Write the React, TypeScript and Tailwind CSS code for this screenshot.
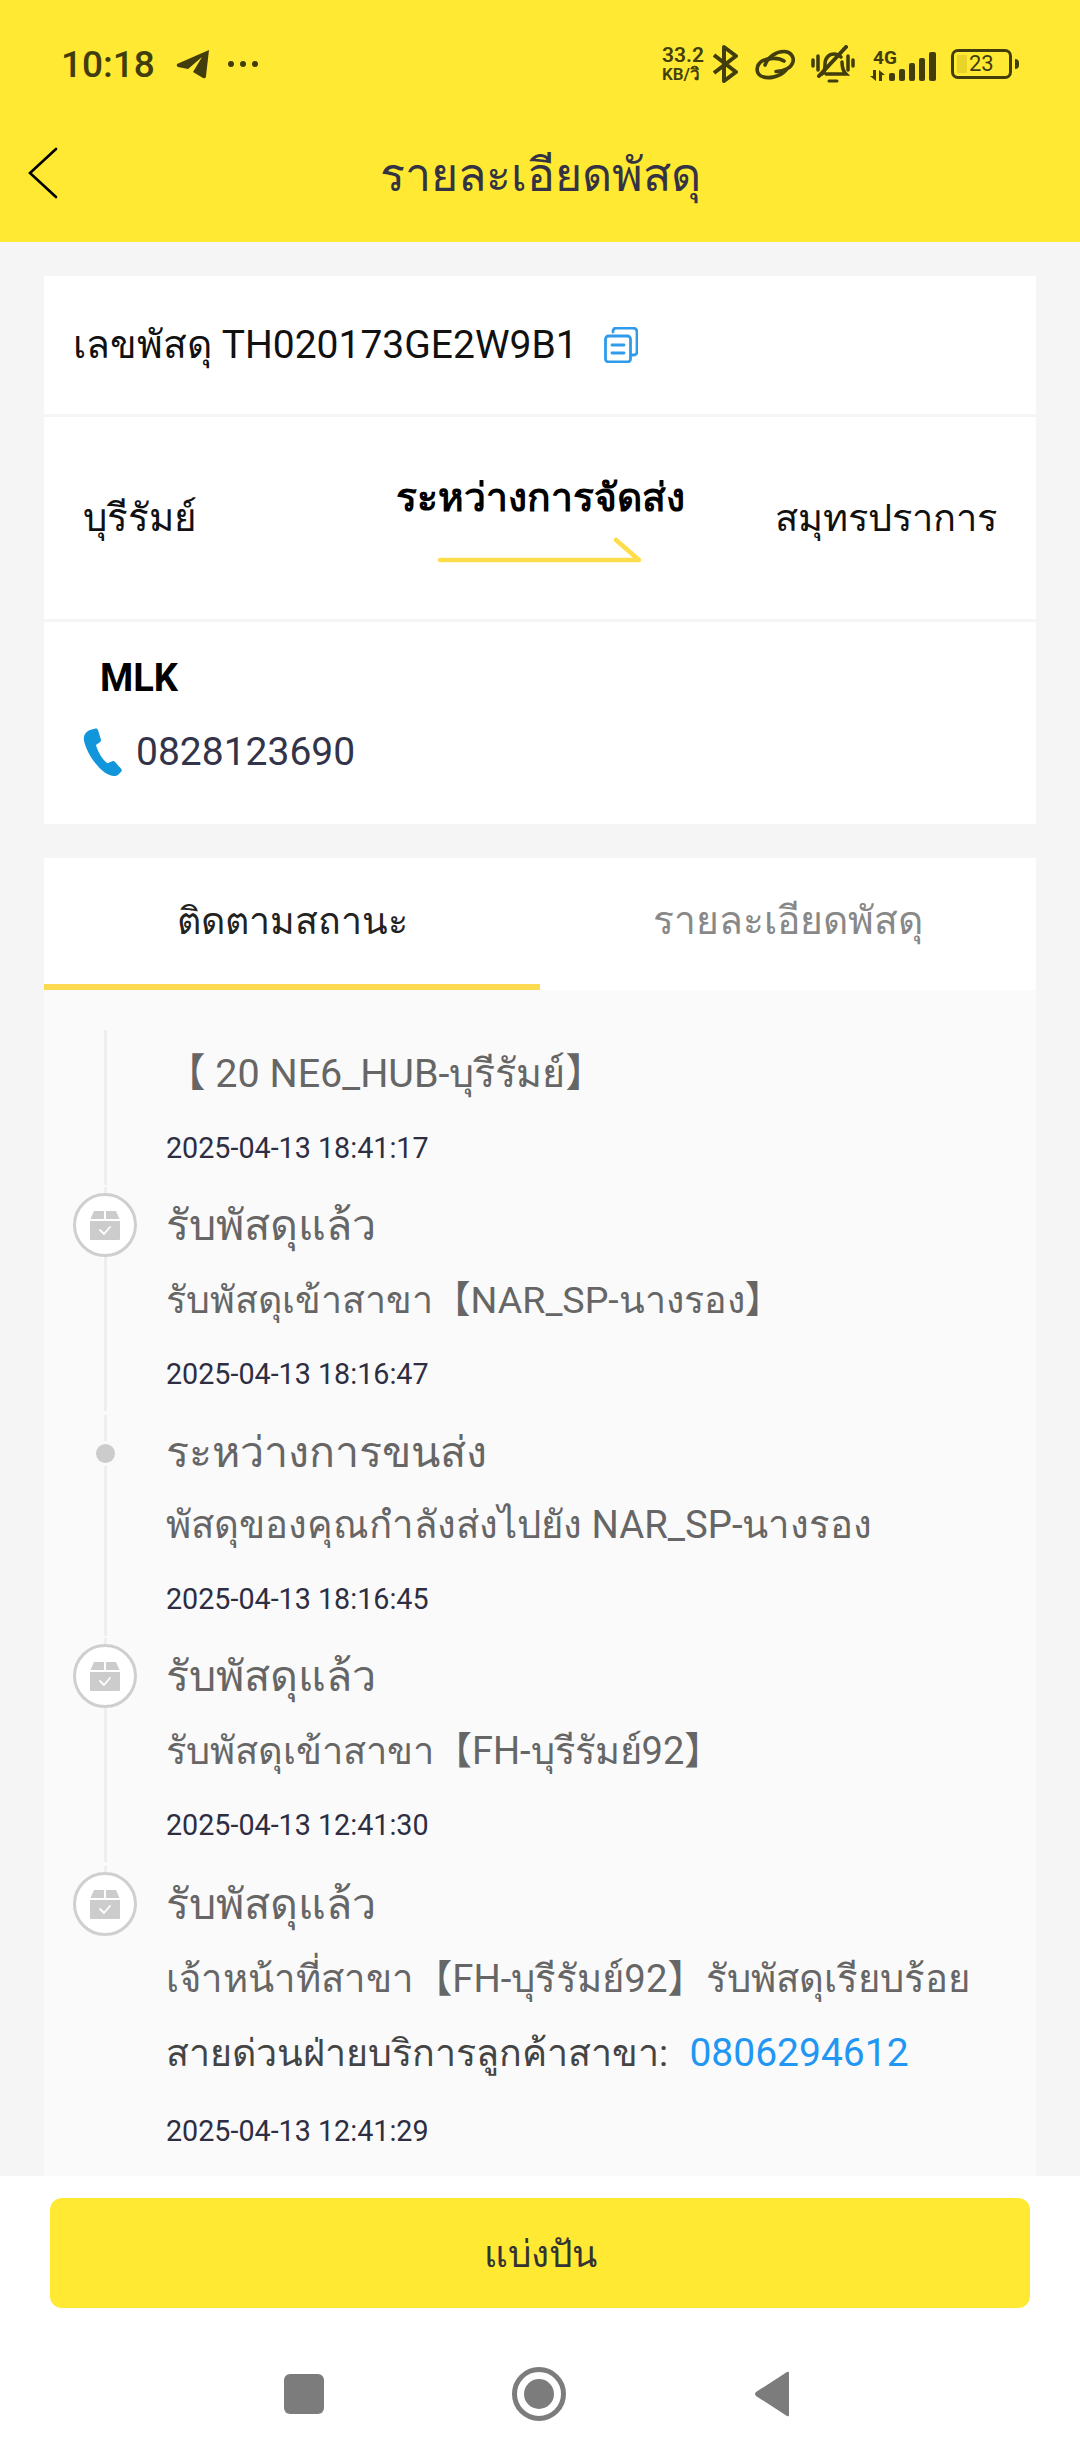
import React from 'react';

const font = { fontFamily: '"Roboto", "Noto Sans", "Noto Sans CJK SC", sans-serif' };

const BoxIcon: React.FC = () => (
  <svg width="32" height="32" viewBox="0 0 32 32" fill="#cccccc">
    <path d="M5 2h10v8H1.5z M17 2h10l3.5 8H17z" />
    <path d="M1 12h30v18a1 1 0 0 1-1 1H2a1 1 0 0 1-1-1z" />
    <path d="M11 21l4 4 6-7" fill="none" stroke="#ffffff" strokeWidth="1.8" strokeLinecap="round" strokeLinejoin="round" />
  </svg>
);

type Step = {
  kind: 'none' | 'box' | 'dot';
  title?: string;
  lineSize: string;
  lines: React.ReactNode[];
  time: string;
};

const steps: Step[] = [
  { kind: 'none', lineSize: 'text-[39.5px]', lines: ['【 20 NE6_HUB-บุรีรัมย์】'], time: '2025-04-13 18:41:17' },
  { kind: 'box', title: 'รับพัสดุแล้ว', lineSize: 'text-[37.6px]', lines: ['รับพัสดุเข้าสาขา【NAR_SP-นางรอง】'], time: '2025-04-13 18:16:47' },
  { kind: 'dot', title: 'ระหว่างการขนส่ง', lineSize: 'text-[38.3px]', lines: ['พัสดุของคุณกำลังส่งไปยัง NAR_SP-นางรอง'], time: '2025-04-13 18:16:45' },
  { kind: 'box', title: 'รับพัสดุแล้ว', lineSize: 'text-[38px]', lines: ['รับพัสดุเข้าสาขา【FH-บุรีรัมย์92】'], time: '2025-04-13 12:41:30' },
  {
    kind: 'box',
    title: 'รับพัสดุแล้ว',
    lineSize: 'text-[38.3px]',
    lines: [
      'เจ้าหน้าที่สาขา【FH-บุรีรัมย์92】รับพัสดุเรียบร้อย',
      <span key="hotline" className="text-[37.6px] text-[#444444]">
        สายด่วนฝ่ายบริการลูกค้าสาขา: <span className="ml-[12px] text-[39px] text-[#2196f3]">0806294612</span>
      </span>,
    ],
    time: '2025-04-13 12:41:29',
  },
];

const StatusBar: React.FC = () => (
  <div className="flex h-[128px] items-start justify-between pl-[61px] pr-[61px] pt-[42px] text-[#423d0c]">
    <div className="flex h-[44px] items-center">
      <span className="text-[37px] font-medium leading-none">10:18</span>
      <svg className="ml-[21px]" width="34" height="30" viewBox="0 0 34 30" fill="#423d0c">
        <path d="M33 1 L1 15 Q0 17 2 18 L12 20 L26 8 L17 23 L27 29 Q30 30 30 27 Z" />
      </svg>
      <div className="ml-[18px] flex gap-[6px]">
        <span className="h-[6px] w-[6px] rounded-full bg-[#423d0c]" />
        <span className="h-[6px] w-[6px] rounded-full bg-[#423d0c]" />
        <span className="h-[6px] w-[6px] rounded-full bg-[#423d0c]" />
      </div>
    </div>
    <div className="flex h-[44px] items-center">
      <div className="flex w-[44px] flex-col items-start font-semibold">
        <span className="text-[21px] leading-[19px]">33.2</span>
        <span className="text-[17px] leading-[18px]">KB/วิ</span>
      </div>
      <svg className="ml-[7px]" width="25" height="38" viewBox="0 0 25 38" fill="none" stroke="#423d0c" strokeWidth="4" strokeLinejoin="round">
        <path d="M1 10 L23 27 L11 36 V2 L23 11 L1 28" />
      </svg>
      <svg className="ml-[16px]" width="42" height="31" viewBox="0 0 42 31" fill="none" stroke="#423d0c" strokeWidth="3.6" strokeLinecap="round">
        <path d="M11 16 C14 8 22 2.5 30 2.5 C37 2.5 40 8 39 13 C37 19 31 22 22 22.5" />
        <path d="M30 12 C24 8 14 9 8 12 C2 16 1.5 24 7 27 C13 30 25 29 32 21" />
      </svg>
      <svg className="ml-[15px]" width="44" height="38" viewBox="0 0 44 38" fill="none" stroke="#423d0c" strokeWidth="3.5" strokeLinecap="round">
        <path d="M2 15v6 M7 11v14 M37 11v14 M42 15v6" />
        <path d="M11 29c3-2 3-5 3-10 0-6 4-10 9-10 3 0 5 1 7 3 M31 17c0 5 1 9 4 12 H15" />
        <path d="M8 31 L35 2" strokeWidth="4" />
        <path d="M18 36h8" strokeWidth="3" />
      </svg>
      <div className="ml-[15px] flex w-[30px] flex-col items-center">
        <span className="text-[19px] font-bold leading-[20px]">4G</span>
        <svg className="mt-[2px] self-start" width="15" height="11" viewBox="0 0 15 11" fill="#423d0c">
          <path d="M6 0v11L0 6h3V0z M9 0l6 5h-3v6H9z" />
        </svg>
      </div>
      <svg className="ml-[-11px] mt-[4px]" width="47" height="30" viewBox="0 0 47 30" fill="#423d0c">
        <rect x="0" y="22" width="6" height="8" rx="2" />
        <rect x="10" y="18" width="6" height="12" rx="2" />
        <rect x="20" y="12" width="6" height="18" rx="2" />
        <rect x="30" y="7" width="6" height="23" rx="2" />
        <rect x="40" y="1" width="7" height="29" rx="2" />
      </svg>
      <div className="relative ml-[15px] flex h-[30px] w-[61px] items-center rounded-[7px] border-[3px] border-[#423d0c] pl-[15px]">
        <span className="absolute bottom-[3px] left-[3px] top-[3px] w-[10px] bg-[#e8d428]" />
        <span className="relative text-[22px] font-normal leading-none">23</span>
      </div>
      <span className="ml-[3px] h-[10px] w-[4px] rounded-r-full bg-[#423d0c]" />
    </div>
  </div>
);

const Timeline: React.FC = () => (
  <div className="flex-1 overflow-hidden bg-[#fafafa] pt-[40px]">
    {steps.map((step, i) => (
      <div key={i} className={step.kind === 'box' ? 'flex pb-[4px]' : 'flex pb-[2px]'}>
        <div className="flex w-[122px] shrink-0 flex-col items-center">
          {step.kind === 'box' && (
            <>
              <div className="h-[6px] w-[3px] bg-[#eeeeee]" />
              <div className="flex h-[64px] w-[64px] items-center justify-center rounded-full border-[3px] border-[#cfcfcf] bg-white">
                <BoxIcon />
              </div>
            </>
          )}
          {step.kind === 'dot' && (
            <>
              <div className="h-[26px] w-[3px] bg-[#eeeeee]" />
              <div className="my-[3px] h-[19px] w-[19px] rounded-full bg-[#cccccc]" />
            </>
          )}
          {i < steps.length - 1 && <div className="w-[3px] flex-1 bg-[#eeeeee]" />}
        </div>
        <div className={i === 0 ? 'pt-[7px]' : step.kind === 'dot' ? 'pt-[2px]' : ''}>
          {step.title && (
            <div className={step.kind === 'dot' ? 'text-[43px] leading-[71px] text-[#666666]' : 'text-[43px] leading-[76px] text-[#666666]'}>
              {step.title}
            </div>
          )}
          {step.lines.map((line, j) => (
            <div key={j} className={`whitespace-nowrap leading-[74px] text-[#666666] ${step.lineSize}`}>{line}</div>
          ))}
          <div className={i === steps.length - 1 ? 'mt-[4px] text-[28.7px] leading-[74px] text-[#2e2e42]' : 'text-[28.7px] leading-[74px] text-[#2e2e42]'}>
            {step.time}
          </div>
        </div>
      </div>
    ))}
  </div>
);

export default function App() {
  return (
    <div className="flex h-[2460px] w-[1080px] flex-col overflow-hidden bg-[#f5f5f5]" style={font}>
      <div className="h-[242px] shrink-0 bg-[#ffe933]">
        <StatusBar />
        <div className="relative flex h-[114px] items-start justify-center">
          <svg className="absolute left-[26px] top-[18px]" width="34" height="54" viewBox="0 0 34 54" fill="none" stroke="#000000" strokeWidth="2.6" strokeLinecap="round">
            <path d="M30 3 L4 27 L30 51" />
          </svg>
          <h1 className="text-[46.5px] font-normal leading-[94px] text-[#333344]">รายละเอียดพัสดุ</h1>
        </div>
      </div>

      <div className="mx-[44px] mt-[34px] flex shrink-0 flex-col gap-[3px]">
        <div className="flex h-[138px] items-center bg-white pl-[29px]">
          <span className="text-[39px] text-[#111111]">เลขพัสดุ TH020173GE2W9B1</span>
          <svg className="ml-[26px]" width="34" height="36" viewBox="0 0 34 36" fill="none" stroke="#2f9bea" strokeWidth="2.8" strokeLinejoin="round" strokeLinecap="round">
            <path d="M9 5 V4 a3 3 0 0 1 3-3 H29 a4 4 0 0 1 4 4 V25 a3 3 0 0 1-3 3 H27" />
            <rect x="1.5" y="9" width="25" height="26" rx="3" fill="#ffffff" />
            <path d="M8 18h12 M8 26h12" />
          </svg>
        </div>
        <div className="flex h-[202px] items-center bg-white px-[39px]">
          <span className="flex-1 text-[38.5px] text-[#111111]">บุรีรัมย์</span>
          <div className="flex flex-col items-center">
            <span className="text-[39px] font-bold leading-[50px] text-black">ระหว่างการจัดส่ง</span>
            <svg className="mt-[14px]" width="204" height="26" viewBox="0 0 204 26" fill="none" stroke="#ffdd4a" strokeWidth="4.5" strokeLinecap="round" strokeLinejoin="round">
              <path d="M2 23 H201 L178 3" />
            </svg>
          </div>
          <span className="flex-1 text-right text-[38px] text-[#111111]">สมุทรปราการ</span>
        </div>
        <div className="flex h-[202px] flex-col bg-white pl-[34px]">
          <div className="ml-[22px] mt-[34px] text-[38px] font-bold leading-[44px] text-black">MLK</div>
          <div className="mt-[23px] flex items-center">
            <svg width="50" height="50" viewBox="0 0 24 24" fill="#1296db">
              <path d="M6.2 1.3 L8.4 0.7 C9 0.6 9.4 0.9 9.6 1.4 L11 6 C11.1 6.5 11 7 10.5 7.3 L8.6 8.6 C9.4 11.5 11.6 15.5 14.2 17.4 L16.4 16.4 C16.9 16.2 17.4 16.3 17.7 16.7 L20.8 20.1 C21.1 20.5 21.1 21 20.8 21.4 L19.3 22.9 C18 24 15.2 23.6 13 22 C8.4 18.6 4 12 2.9 6.6 C2.4 4 3.8 2 6.2 1.3 Z" />
            </svg>
            <span className="ml-[8px] text-[39px] text-[#33334a]">0828123690</span>
          </div>
        </div>
      </div>

      <div className="mx-[44px] mt-[34px] flex min-h-0 flex-1 flex-col">
        <div className="flex h-[132px] shrink-0 bg-white">
          <div className="flex flex-1 items-center justify-center border-b-[6px] border-[#fdd94f] text-[37.5px] text-[#222222]">ติดตามสถานะ</div>
          <div className="flex flex-1 items-center justify-center pb-[6px] text-[39px] text-[#888888]">รายละเอียดพัสดุ</div>
        </div>
        <Timeline />
      </div>

      <div className="h-[284px] shrink-0 bg-white px-[50px] pt-[22px]">
        <button className="flex h-[110px] w-full items-center justify-center rounded-[12px] bg-[#ffe933] pt-[3px] text-[37px] text-[#333333]">แบ่งปัน</button>
        <div className="mt-[59px] flex items-center justify-center gap-[188px] pr-[6px]">
          <div className="h-[40px] w-[40px] rounded-[6px] bg-[#7c7c7c]" />
          <div className="flex h-[54px] w-[54px] items-center justify-center rounded-full border-[5px] border-[#7c7c7c]">
            <div className="h-[30px] w-[30px] rounded-full bg-[#7c7c7c]" />
          </div>
          <svg width="36" height="46" viewBox="0 0 36 46" fill="#7c7c7c">
            <path d="M35 2 V44 Q35 46 33 45 L2 25 Q0 23 2 21 L33 1 Q35 0 35 2 Z" />
          </svg>
        </div>
      </div>
    </div>
  );
}
